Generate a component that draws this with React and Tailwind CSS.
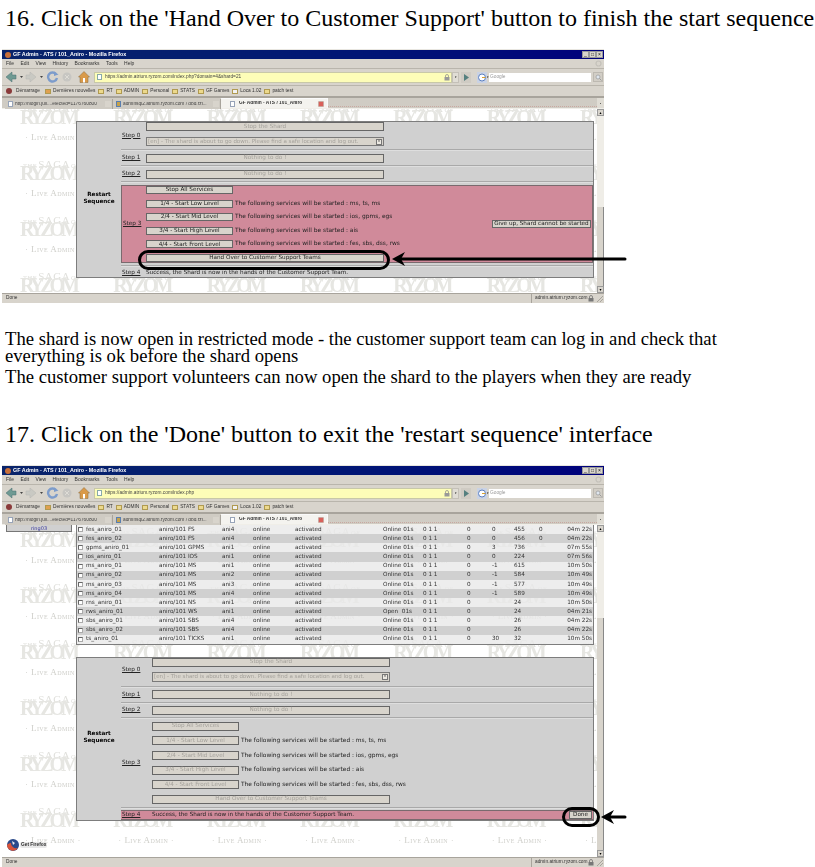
import React from 'react'

const sans = { fontFamily: '"Liberation Sans", sans-serif' }

// repeated site logo behind the page
function Watermark({ count, className }) {
  const tiles = Array.from({ length: count })
  return (
    <div className={`absolute inset-x-0 top-0 bottom-0 grid grid-cols-[repeat(7,93.33px)] auto-rows-[56px] overflow-hidden pl-[16px] ${className}`}>
      {tiles.map((_, i) => (
        <div key={i} className="relative h-[56px] flex flex-col leading-none whitespace-nowrap font-['Liberation_Serif',serif]">
          <div className="h-[8px] pl-[5px] mt-[1px] text-[#e0e0dc] tracking-[0.5px] flex items-baseline gap-[1px]">
            <span className="text-[6.5px]">THE</span>
            <span className="text-[11px]">SAGA</span>
            <span className="text-[6.5px]">OF</span>
          </div>
          <div className="h-[16px] -mt-[4px] pl-[2px] text-[20px] font-bold text-[#e6e6e2] tracking-[-4px]">RYZOM</div>
          <div className="mt-[10px] pl-[7px] text-[9px] text-[#cfcfca] tracking-[0.4px] [font-variant:small-caps]">· Live Admin ·</div>
        </div>
      ))}
    </div>
  )
}

function Btn({ size = 'w-[238px] h-[9px]', disabled, children, className = '' }) {
  return (
    <div className={`${size} shrink-0 flex items-center justify-center bg-[#d8d4cc] border border-[#666] text-[5.7px] leading-none whitespace-nowrap ${disabled ? 'text-[#a5a29c]' : 'text-[#222]'} ${className}`}>
      {children}
    </div>
  )
}

function StepLabel({ w, className = '', children }) {
  return (
    <div className={`${w} shrink-0 pl-[1px] text-[5.7px] leading-none ${className}`}>
      <span className="underline text-[#222]">{children}</span>
    </div>
  )
}

function Select({ className = 'h-[9px]' }) {
  return (
    <div className={`w-[238px] ${className} shrink-0 flex items-center justify-between bg-[#d8d4cc] border border-[#7a7a7a] px-[1px] text-[5.5px] text-[#a5a29c] leading-none whitespace-nowrap`}>
      <span>[en] - The shard is about to go down. Please find a safe location and log out.</span>
      <span className="w-[6px] h-[6px] bg-[#ece9e2] border border-[#777] flex items-center justify-center text-[3px] text-black">▾</span>
    </div>
  )
}

function Separator() {
  return <div className="h-[2px] shrink-0 bg-[#a9a9a9] border-b border-[#dedede]" />
}

function ServiceRow({ label, info, size, disabled }) {
  return (
    <div className="flex items-center gap-[2px]">
      <Btn size={size} disabled={disabled}>{label}</Btn>
      <span className="text-[5.9px] text-[#222] leading-none whitespace-nowrap">{info}</span>
    </div>
  )
}

const services = [
  ['1/4 - Start Low Level', 'The following services will be started : ms, ts, ms'],
  ['2/4 - Start Mid Level', 'The following services will be started : ios, gpms, egs'],
  ['3/4 - Start High Level', 'The following services will be started : ais'],
  ['4/4 - Start Front Level', 'The following services will be started : fes, sbs, dss, rws'],
]

function Toolbar({ url }) {
  return (
    <div className="h-[17px] flex items-center bg-[#d8d4cc] border-b border-[#b9b5ac] pl-[4px]">
      <svg width="70" height="12" viewBox="0 0 70 12" className="shrink-0">
        <path d="M0 6 L6 1 V4 H10 V8 H6 V11 Z" fill="#6f9a93" stroke="#4b6e70" strokeWidth=".5" />
        <path d="M14 5 h3 l-1.5 2 z" fill="#444" />
        <path d="M30 6 L24 1 V4 H20 V8 H24 V11 Z" fill="#c9c9c3" stroke="#b5b5b0" strokeWidth=".5" />
        <path d="M34 5 h3 l-1.5 2 z" fill="#444" />
        <path d="M50 3 A4.5 4.5 0 1 0 51 7" fill="none" stroke="#7d9ccb" strokeWidth="2.4" />
        <path d="M48 0.5 L52.5 3.5 L48 5 Z" fill="#7d9ccb" />
        <circle cx="61" cy="6" r="4.5" fill="#c7c6c2" />
        <path d="M59 4 L63 8 M63 4 L59 8" stroke="#dedcd6" strokeWidth="1" />
      </svg>
      <svg width="12" height="12" viewBox="0 0 12 12" className="ml-[2px] shrink-0">
        <path d="M0.5 6 L6 0.5 L11.5 6 H10 V11.5 H2 V6 Z" fill="#d99a4a" stroke="#8a6a3a" strokeWidth=".5" />
        <rect x="5" y="7" width="2" height="4.5" fill="#fff" />
      </svg>
      <div className="ml-[4px] w-[358px] h-[11px] shrink-0 flex items-center justify-between bg-[#fdfdb8] pl-[2px] pr-[1px] border border-[#c8c8a8] text-[4.8px] text-[#444] leading-none">
        <span className="flex items-center gap-[3px]">
          <span className="w-[5px] h-[6px] bg-white border border-[#8aa]" />
          {url}
        </span>
        <svg width="6" height="7" viewBox="0 0 6 7"><rect x=".5" y="3" width="5" height="3.5" fill="#999" /><path d="M1.5 3 V2 a1.5 1.5 0 0 1 3 0 V3" stroke="#888" fill="none" strokeWidth=".7" /></svg>
      </div>
      <div className="w-[7px] h-[11px] shrink-0 bg-[#e0ddd5] border border-[#c4c0b8] flex items-center justify-center text-[3px]">▾</div>
      <svg width="10" height="11" viewBox="0 0 10 11" className="ml-[2px] shrink-0"><rect width="10" height="11" fill="#cfcbc3" /><path d="M3 2 L8 5.5 L3 9 Z" fill="#55807f" /></svg>
      <svg width="10" height="11" viewBox="0 0 10 11" className="ml-[6px] shrink-0">
        <rect width="10" height="11" fill="#c9d2e4" />
        <circle cx="5" cy="5.5" r="3.5" fill="#fff" stroke="#5a7fc0" strokeWidth="1" />
        <path d="M5 5.5 H8.5" stroke="#d9a030" strokeWidth="1" />
      </svg>
      <div className="w-[2px] shrink-0 text-[3px] leading-none">▾</div>
      <div className="w-[102px] h-[9px] shrink-0 flex items-center bg-white pl-[1px] text-[4.8px] text-[#999] leading-none">Google</div>
      <div className="w-[10px] h-[10px] ml-[2px] shrink-0 bg-[#d2cec6] border border-[#bdb9b1] flex items-center justify-center">
        <svg width="7" height="7" viewBox="0 0 7 7"><circle cx="3" cy="3" r="2" fill="#dfe6ee" stroke="#999" strokeWidth=".7" /><path d="M4.5 4.5 L6.5 6.5" stroke="#999" /></svg>
      </div>
    </div>
  )
}

function Tab({ title, size, active, favicon }) {
  return (
    <div className={`${size} h-full flex items-center pl-[3px] pr-[1px] shrink-0 border-r border-[#a8a49c] text-[4.8px] leading-none whitespace-nowrap ${active ? 'bg-[#f4f3ef] font-bold text-[#333] border-t border-[#fafafa]' : 'bg-[#cfcbc3] text-[#444] mt-[1px]'}`}>
      <span className={`w-[5px] h-[6px] mr-[2px] shrink-0 border ${active ? 'ml-[6px] mr-[4px] bg-white border-[#98a4b8]' : favicon ? 'bg-[#c7a24a] border-[#5a7fb0]' : 'bg-white border-[#98a4b8]'}`} />
      <span className="flex-1 overflow-hidden">{title}</span>
      {active ? (
        <span className="w-[6px] h-[6px] mr-[2px] rounded-[1px] bg-[#d9605a] border border-[#c9a8a0]" />
      ) : (
        <span className="w-[6px] h-[6px] bg-[#d8d4cc]" />
      )}
    </div>
  )
}

function Chrome({ url }) {
  return (
    <>
      <div className="h-[9px] shrink-0 flex items-center justify-between bg-gradient-to-r from-[#0a246a] to-[#00007c] pl-[3px] pr-[1px] text-white font-bold text-[5.4px] leading-none">
        <span className="flex items-center gap-[2px]">
          <span className="w-[6px] h-[6px] rounded-full bg-[#c9703a]" />
          GF Admin - ATS / 101_Aniro - Mozilla Firefox
        </span>
        <span className="flex font-normal">
          {['_', '□', '×'].map((c) => (
            <span key={c} className="w-[7px] h-[7px] bg-[#d8d4cc] border border-[#999] text-[#111] text-[5px] flex items-center justify-center leading-none">{c}</span>
          ))}
        </span>
      </div>
      <div className="h-[10px] shrink-0 flex items-center gap-[6.4px] bg-[#d8d4cc] border-b border-[#b9b5ac] pl-[4px] pr-[2px] text-[5px] text-[#333] leading-none">
        {['File', 'Edit', 'View', 'History', 'Bookmarks', 'Tools', 'Help'].map((m) => (
          <span key={m}>{m}</span>
        ))}
        <svg width="7" height="7" viewBox="0 0 7 7" className="ml-auto"><circle cx="3.5" cy="3.5" r="2.5" fill="none" stroke="#c4c1ba" strokeWidth="1.2" /></svg>
      </div>
      <Toolbar url={url} />
      <div className="h-[12px] shrink-0 flex items-center gap-[3px] bg-[#d8d4cc] border-b-2 border-[#a8a49c] pl-[4px] text-[4.8px] text-[#333] leading-none">
        <span className="w-[6px] h-[6px] rounded-full bg-[#8a3a3a] mr-[1px]" />
        <span className="mr-[2px]">Démarrage</span>
        {[['Dernières nouvelles', 'bg-[#e0a050]'], ['RT'], ['ADMIN'], ['Personal'], ['STATS'], ['GF Games'], ['Loca 1.02', 'bg-[#f2f2f2]'], ['patch test']].map(([b, c]) => (
          <span key={b} className="flex items-center gap-[2px]">
            <span className={`w-[6px] h-[5px] border border-[#b09a50] ${c || 'bg-[#ecd98c]'}`} />
            {b}
          </span>
        ))}
      </div>
      <div className="h-[11px] shrink-0 flex bg-[#d0ccc4] pl-[3px] border-b border-[#f0eee8]">
        <Tab title="http://nlogin.juli....elected=1176760800" size="w-[108px]" />
        <Tab title="adminsql2.atrium.ryzom.com / dbd.rzl..." size="w-[108px]" favicon />
        <Tab title="GF Admin - ATS / 101_Aniro" size="w-[107px]" active />
        <div className="flex-1 border-b border-dotted border-[#c8a8a0] mb-[1px]" />
        <div className="w-[7px] bg-[#e0ddd5] flex items-center justify-center text-[3px] leading-none">▪</div>
      </div>
    </>
  )
}

function StatusBar() {
  return (
    <div className="h-[10px] shrink-0 flex bg-[#d8d4cc] border-t border-[#a8a49c] text-[4.8px] text-[#333] leading-none">
      <div className="flex-1 flex items-center pl-[4px]">Done</div>
      <div className="w-[64px] flex items-center justify-between border-l border-[#a8a49c] pl-[3px] pr-[1px]">
        admin.atrium.ryzom.com
        <svg width="6" height="7" viewBox="0 0 6 7"><rect x=".5" y="3" width="5" height="3.5" fill="#777" /><path d="M1.5 3 V2 a1.5 1.5 0 0 1 3 0 V3" stroke="#666" fill="none" strokeWidth=".7" /></svg>
      </div>
      <svg width="9" height="9" viewBox="0 0 9 9"><path d="M8 2 L2 8 M8 5 L5 8" stroke="#a8a49c" /></svg>
    </div>
  )
}

function Scrollbar({ track }) {
  return (
    <div className="w-[7px] shrink-0 flex flex-col bg-[#efede7]">
      <div className="h-[7px] bg-[#d8d4cc] border border-[#999] flex items-center justify-center text-[4px] leading-none">▴</div>
      <div className={track} />
      <div className="flex-1 bg-[#d8d4cc] border-r border-[#888]" />
      <div className="h-[7px] bg-[#d8d4cc] border border-[#999] flex items-center justify-center text-[4px] leading-none">▾</div>
    </div>
  )
}

function Browser({ url, height, track, tiles, shift, children }) {
  return (
    <div className={`${height} w-[602px] ml-[2px] flex flex-col bg-[#d8d4cc] border-t border-[#e8e6e0] blur-[0.45px] font-['DejaVu_Sans',sans-serif]`}>
      <div className="contents" style={sans}>
        <Chrome url={url} />
      </div>
      <div className="flex-1 flex min-h-0">
        <div className="flex-1 relative bg-white overflow-hidden min-w-0">
          <Watermark count={tiles} className={shift} />
          <div className="relative h-full">{children}</div>
        </div>
        <Scrollbar track={track} />
      </div>
      <div className="contents" style={sans}>
        <StatusBar />
      </div>
    </div>
  )
}

function RestartCol() {
  return (
    <div className="w-[44px] shrink-0 flex items-center justify-center text-center text-[5.7px] font-bold text-black leading-[7px] pb-[4px]">
      <span>Restart<br />Sequence</span>
    </div>
  )
}

const pinkBtn = 'w-[87px] h-[8px]'

function PanelTop() {
  return (
    <div className="ml-[74px] mt-[12px] w-[518px] h-[157px] bg-[#d0d0d0] border border-[#7d7d7d] flex">
      <RestartCol />
      <div className="flex-1 flex flex-col min-w-0">
        <div className="flex h-[27px] items-center">
          <StepLabel w="w-[25px]">Step 0</StepLabel>
          <div className="self-start flex flex-col gap-[6px]">
            <Btn disabled>Stop the Shard</Btn>
            <Select />
          </div>
        </div>
        <Separator />
        <div className="flex h-[14px] items-center">
          <StepLabel w="w-[25px]">Step 1</StepLabel>
          <Btn disabled>Nothing to do !</Btn>
        </div>
        <Separator />
        <div className="flex h-[14px] items-center">
          <StepLabel w="w-[25px]">Step 2</StepLabel>
          <Btn disabled>Nothing to do !</Btn>
        </div>
        <Separator />
        <div className="mt-[2px] h-[78px] shrink-0 bg-[#d08a9a] border border-[#7a6a6e] flex items-center">
          <StepLabel w="w-[24px]">Step 3</StepLabel>
          <div className="flex flex-col gap-[5.6px]">
            <Btn size={pinkBtn}>Stop All Services</Btn>
            {services.map(([l, i]) => <ServiceRow key={l} label={l} info={i} size={pinkBtn} />)}
            <Btn size="w-[238px] h-[8px]">Hand Over to Customer Support Teams</Btn>
          </div>
          <Btn size="w-[99px] h-[8px]" className="ml-auto mr-[1px]">Give up, Shard cannot be started</Btn>
        </div>
        <div className="mt-[2px]"><Separator /></div>
        <div className="flex flex-1 items-center pt-[2px]">
          <StepLabel w="w-[25px]">Step 4</StepLabel>
          <span className="text-[5.7px] text-[#222] leading-none whitespace-nowrap">Success, the Shard is now in the hands of the Customer Support Team.</span>
        </div>
      </div>
    </div>
  )
}

const rows = [
  ['fes_aniro_01', 'aniro/101 FS', 'ani4', 'Online 01s', '0', '455', '0', '04m 22s'],
  ['fes_aniro_02', 'aniro/101 FS', 'ani4', 'Online 01s', '0', '456', '0', '04m 22s'],
  ['gpms_aniro_01', 'aniro/101 GPMS', 'ani1', 'Online 01s', '3', '736', '', '07m 55s'],
  ['ios_aniro_01', 'aniro/101 IOS', 'ani1', 'Online 01s', '0', '224', '', '07m 56s'],
  ['ms_aniro_01', 'aniro/101 MS', 'ani1', 'Online 01s', '-1', '615', '', '10m 50s'],
  ['ms_aniro_02', 'aniro/101 MS', 'ani2', 'Online 01s', '-1', '584', '', '10m 49s'],
  ['ms_aniro_03', 'aniro/101 MS', 'ani3', 'Online 01s', '-1', '577', '', '10m 49s'],
  ['ms_aniro_04', 'aniro/101 MS', 'ani4', 'Online 01s', '-1', '589', '', '10m 49s'],
  ['rns_aniro_01', 'aniro/101 NS', 'ani1', 'Online 01s', '', '24', '', '10m 50s'],
  ['rws_aniro_01', 'aniro/101 WS', 'ani1', 'Open  01s', '', '24', '', '04m 21s'],
  ['sbs_aniro_01', 'aniro/101 SBS', 'ani4', 'Online 01s', '', '26', '', '04m 22s'],
  ['sbs_aniro_02', 'aniro/101 SBS', 'ani4', 'Online 01s', '', '26', '', '04m 22s'],
  ['ts_aniro_01', 'aniro/101 TICKS', 'ani1', 'Online 01s', '30', '32', '', '10m 50s'],
]

function ServiceTable() {
  return (
    <div className="ml-[74px] w-[518px] border border-t-0 border-[#7d7d7d] text-[5.7px] text-[#333] leading-none">
      {rows.map((r, i) => (
        <div key={r[0]} className={`h-[9.15px] grid grid-cols-[9px_73px_63px_31px_42px_88px_40px_44px_25px_22px_25px_1fr] items-center whitespace-nowrap ${i % 2 ? 'bg-[#d0d0d0]' : 'bg-[#e9e9e9]/80'}`}>
          <span className="ml-[1px] w-[5px] h-[5px] bg-white border border-[#aaa] border-t-[#666] border-l-[#666]" />
          <span>{r[0]}</span>
          <span>{r[1]}</span>
          <span>{r[2]}</span>
          <span>online</span>
          <span>activated</span>
          <span className="whitespace-pre">{r[3]}</span>
          <span>0 1 1</span>
          <span>0</span>
          <span>{r[4]}</span>
          <span>{r[5]}</span>
          <span className="flex justify-between pr-[1px]"><span>{r[6]}</span><span>{r[7]}</span></span>
        </div>
      ))}
    </div>
  )
}

function PanelBottom() {
  return (
    <div className="ml-[74px] mt-[12px] w-[518px] bg-[#d0d0d0] border border-[#7d7d7d] flex">
      <RestartCol />
      <div className="flex-1 flex flex-col min-w-0">
        <div className="flex h-[28px] items-center">
          <StepLabel w="w-[31px]" className="-mt-[4px]">Step 0</StepLabel>
          <div className="self-start flex flex-col gap-[5px]">
            <Btn disabled>Stop the Shard</Btn>
            <Select className="h-[10px]" />
          </div>
        </div>
        <Separator />
        <div className="flex h-[14px] items-center">
          <StepLabel w="w-[31px]">Step 1</StepLabel>
          <Btn disabled>Nothing to do !</Btn>
        </div>
        <Separator />
        <div className="flex h-[13px] items-center">
          <StepLabel w="w-[31px]">Step 2</StepLabel>
          <Btn disabled>Nothing to do !</Btn>
        </div>
        <Separator />
        <div className="flex h-[88px] items-center">
          <StepLabel w="w-[31px]">Step 3</StepLabel>
          <div className="flex flex-col gap-[5.6px]">
            <Btn size="w-[87px] h-[9px]" disabled>Stop All Services</Btn>
            {services.map(([l, i]) => <ServiceRow key={l} label={l} info={i} size="w-[87px] h-[9px]" disabled />)}
            <Btn disabled>Hand Over to Customer Support Teams</Btn>
          </div>
        </div>
        <Separator />
        <div className="mt-[1px] h-[10px] bg-[#d08a9a] border-y border-[#7a6a6e] flex items-center">
          <StepLabel w="w-[31px]">Step 4</StepLabel>
          <span className="text-[5.7px] text-[#222] leading-none whitespace-nowrap">Success, the Shard is now in the hands of the Customer Support Team.</span>
          <Btn size="w-[23px] h-[8px]" className="ml-auto mr-[1px]">Done</Btn>
        </div>
      </div>
    </div>
  )
}

// black callout drawn over the shot
function Callout({ box, arrow, width }) {
  return (
    <>
      <div className={`absolute border-[3px] border-black rounded-[10px] ${box}`} />
      <svg className={`absolute ${arrow}`} width={width} height="14" viewBox={`0 0 ${width} 14`}>
        <path d={`M${width - 2} 7 H8`} stroke="black" strokeWidth="3" strokeLinecap="round" />
        <path d="M0 7 L13 0 L9 7 L13 14 Z" fill="black" />
      </svg>
    </>
  )
}

export default function App() {
  return (
    <div className="relative w-[815px] h-[867px] overflow-hidden bg-white text-black font-['Liberation_Serif',serif]">
      <h2 className="pt-[4px] pl-[5px] h-[49px] text-[24px] leading-[28px] whitespace-nowrap font-normal">
        16. Click on the 'Hand Over to Customer Support' button to finish the start sequence
      </h2>
      <Browser url="https://admin.atrium.ryzom.com/index.php?domain=4&shard=21" height="h-[254px]" track="h-[91px]" tiles={35} shift="-mt-[7px]">
        <PanelTop />
      </Browser>
      <div className="mt-[27px] pl-[5px] text-[18.67px] leading-[17px]">
        <p className="whitespace-nowrap">The shard is now open in restricted mode - the customer support team can log in and check that</p>
        <p className="whitespace-nowrap">everything is ok before the shard opens</p>
        <p className="whitespace-nowrap mt-[4px]">The customer support volunteers can now open the shard to the players when they are ready</p>
      </div>
      <h2 className="mt-[35px] pl-[5px] h-[45px] text-[24px] leading-[28px] whitespace-nowrap font-normal">
        17. Click on the 'Done' button to exit the 'restart sequence' interface
      </h2>
      <Browser url="https://admin.atrium.ryzom.com/index.php" height="h-[402px]" track="h-[86px]" tiles={49} shift="">
        <ServiceTable />
        <PanelBottom />
        <div className="absolute left-[4px] top-0 w-[66px] h-[7px] bg-[#d0d0d0] border border-t-0 border-[#777] text-[5px] text-[#3a3aa0] leading-none flex items-center justify-center">ring03</div>
        <div className="absolute left-[4px] top-[313px] flex items-center text-[4.8px] font-bold text-[#333] leading-none font-['Liberation_Sans',sans-serif]">
          <svg width="14" height="14" viewBox="0 0 14 14">
            <circle cx="7" cy="7" r="6" fill="#2b4a8a" />
            <path d="M1 7 a6 6 0 0 0 11 3 C9 11 5 9 5 5 C3 5 2 6 1 7" fill="#d8543a" />
            <path d="M6 3 L9 5 L7 7 Z" fill="#e8e8f0" />
          </svg>
          <span className="bg-[#e8e8e8] rounded-[2px] px-[1px] py-[1px]">Get Firefox</span>
        </div>
      </Browser>
      <Callout box="left-[138px] top-[250px] w-[252px] h-[20px]" arrow="left-[392px] top-[252px]" width={235} />
      <Callout box="left-[562px] top-[807px] w-[38px] h-[20px]" arrow="left-[601px] top-[810px]" width={26} />
    </div>
  )
}
